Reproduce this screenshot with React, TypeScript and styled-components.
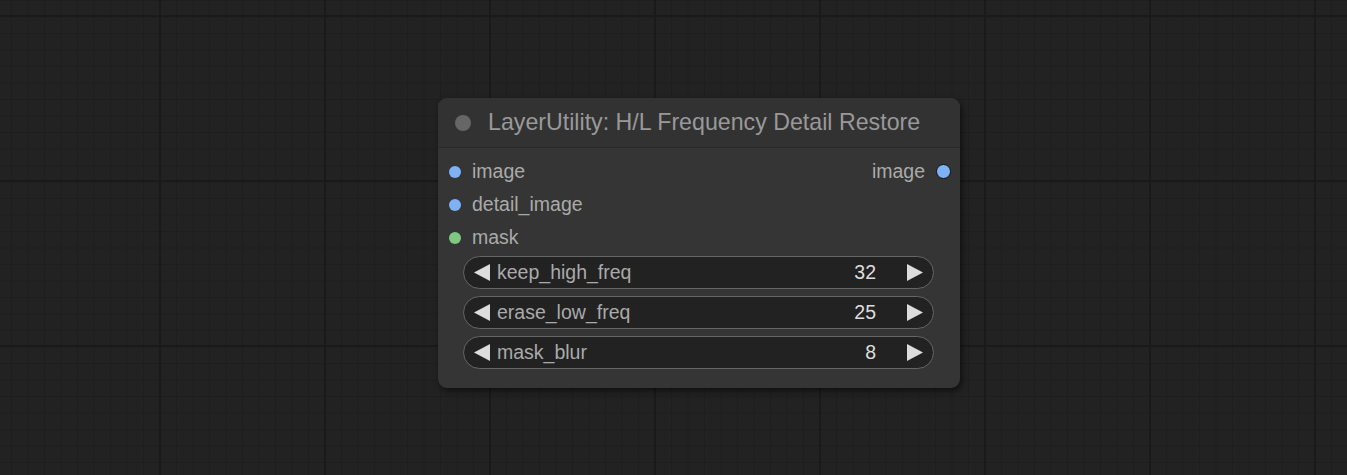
import React from "react";
import styled, { createGlobalStyle } from "styled-components";

const GlobalStyle = createGlobalStyle`
  html, body {
    margin: 0;
    padding: 0;
    background: #222222;
    font-family: "Liberation Sans", Arial, sans-serif;
  }
`;

interface Input {
    name: string;
    color: string;
}

interface Widget {
    name: string;
    value: number;
}

const inputs: Input[] = [
    { name: "image", color: "#7fb2f4" },
    { name: "detail_image", color: "#7fb2f4" },
    { name: "mask", color: "#81c784" },
];

const widgets: Widget[] = [
    { name: "keep_high_freq", value: 32 },
    { name: "erase_low_freq", value: 25 },
    { name: "mask_blur", value: 8 },
];

const Canvas = styled.div`
  position: relative;
  width: 1347px;
  height: 475px;
  overflow: hidden;
  background-color: #222222;
  background-image:
    linear-gradient(to right, #1a1a1a 0 2px, transparent 2px),
    linear-gradient(to bottom, #1a1a1a 0 2px, transparent 2px),
    linear-gradient(to right, #1e1e1e 0 1px, transparent 1px),
    linear-gradient(to bottom, #1e1e1e 0 1px, transparent 1px);
  background-size: 165px 165px, 165px 165px, 16.5px 16.5px, 16.5px 16.5px;
  background-position: 159px 15px, 159px 15px, 11px 0px, 11px 0px;
`;

const Node = styled.div`
  position: absolute;
  left: 438px;
  top: 98px;
  width: 522px;
  height: 290px;
  background: #353535;
  border-radius: 9px;
  box-shadow: 2px 3px 6px rgba(0, 0, 0, 0.55);
  display: flex;
  flex-direction: column;
  overflow: hidden;
`;

const Title = styled.div`
  height: 49px;
  display: flex;
  align-items: center;
  gap: 17px;
  padding-left: 17px;
  background: #323232;
  border-bottom: 1px solid #2a2a2a;
  color: #999999;
  font-size: 23.2px;
`;

const TitleDot = styled.span`
  width: 16px;
  height: 16px;
  border-radius: 50%;
  background: #666666;
`;

const Body = styled.div`
  display: flex;
  flex-direction: column;
  padding-top: 7px;
`;

const SlotRow = styled.div`
  height: 33px;
  display: flex;
  align-items: center;
  justify-content: space-between;
  padding: 0 10px 0 11px;
`;

const Slot = styled.div`
  display: flex;
  align-items: center;
  gap: 11px;
  color: #aaaaaa;
  font-size: 19.5px;
`;

const Dot = styled.span<{ $color: string; $outlined?: boolean }>`
  width: ${(p) => (p.$outlined ? "15px" : "12px")};
  height: ${(p) => (p.$outlined ? "15px" : "12px")};
  box-sizing: border-box;
  border-radius: 50%;
  background: ${(p) => p.$color};
  border: ${(p) => (p.$outlined ? "1.5px solid #111" : "none")};
  margin-right: ${(p) => (p.$outlined ? "-1px" : "0")};
`;

const Widgets = styled.div`
  display: flex;
  flex-direction: column;
  gap: 7px;
  padding: 2px 26px 0 25px;
`;

const WidgetRow = styled.div`
  height: 33px;
  box-sizing: border-box;
  border: 1.5px solid #666666;
  border-radius: 17px;
  background: #222222;
  display: flex;
  align-items: center;
  padding: 0 10px 0 10px;
  font-size: 19.5px;
`;

const Arrow = styled.svg`
  width: 16px;
  height: 17px;
  flex: none;
`;

const WidgetLabel = styled.span`
  flex: 1;
  color: #aaaaaa;
  margin-left: 7px;
`;

const WidgetValue = styled.span`
  color: #dddddd;
  margin-right: 31px;
`;

const LeftArrow = () => (
    <Arrow viewBox="0 0 16 17">
        <polygon points="16,0 16,17 0,8.5" fill="#dddddd" />
    </Arrow>
);

const RightArrow = () => (
    <Arrow viewBox="0 0 16 17">
        <polygon points="0,0 0,17 16,8.5" fill="#dddddd" />
    </Arrow>
);

const App = () => {
    return (
        <>
            <GlobalStyle />
            <Canvas>
                <Node>
                    <Title>
                        <TitleDot />
                        <span>LayerUtility: H/L Frequency Detail Restore</span>
                    </Title>
                    <Body>
                        {inputs.map((input, i) => (
                            <SlotRow key={input.name}>
                                <Slot>
                                    <Dot $color={input.color} />
                                    <span>{input.name}</span>
                                </Slot>
                                {i === 0 && (
                                    <Slot>
                                        <span>image</span>
                                        <Dot $color="#7fb2f4" $outlined />
                                    </Slot>
                                )}
                            </SlotRow>
                        ))}
                        <Widgets>
                            {widgets.map((w) => (
                                <WidgetRow key={w.name}>
                                    <LeftArrow />
                                    <WidgetLabel>{w.name}</WidgetLabel>
                                    <WidgetValue>{w.value}</WidgetValue>
                                    <RightArrow />
                                </WidgetRow>
                            ))}
                        </Widgets>
                    </Body>
                </Node>
            </Canvas>
        </>
    );
};

export default App;
